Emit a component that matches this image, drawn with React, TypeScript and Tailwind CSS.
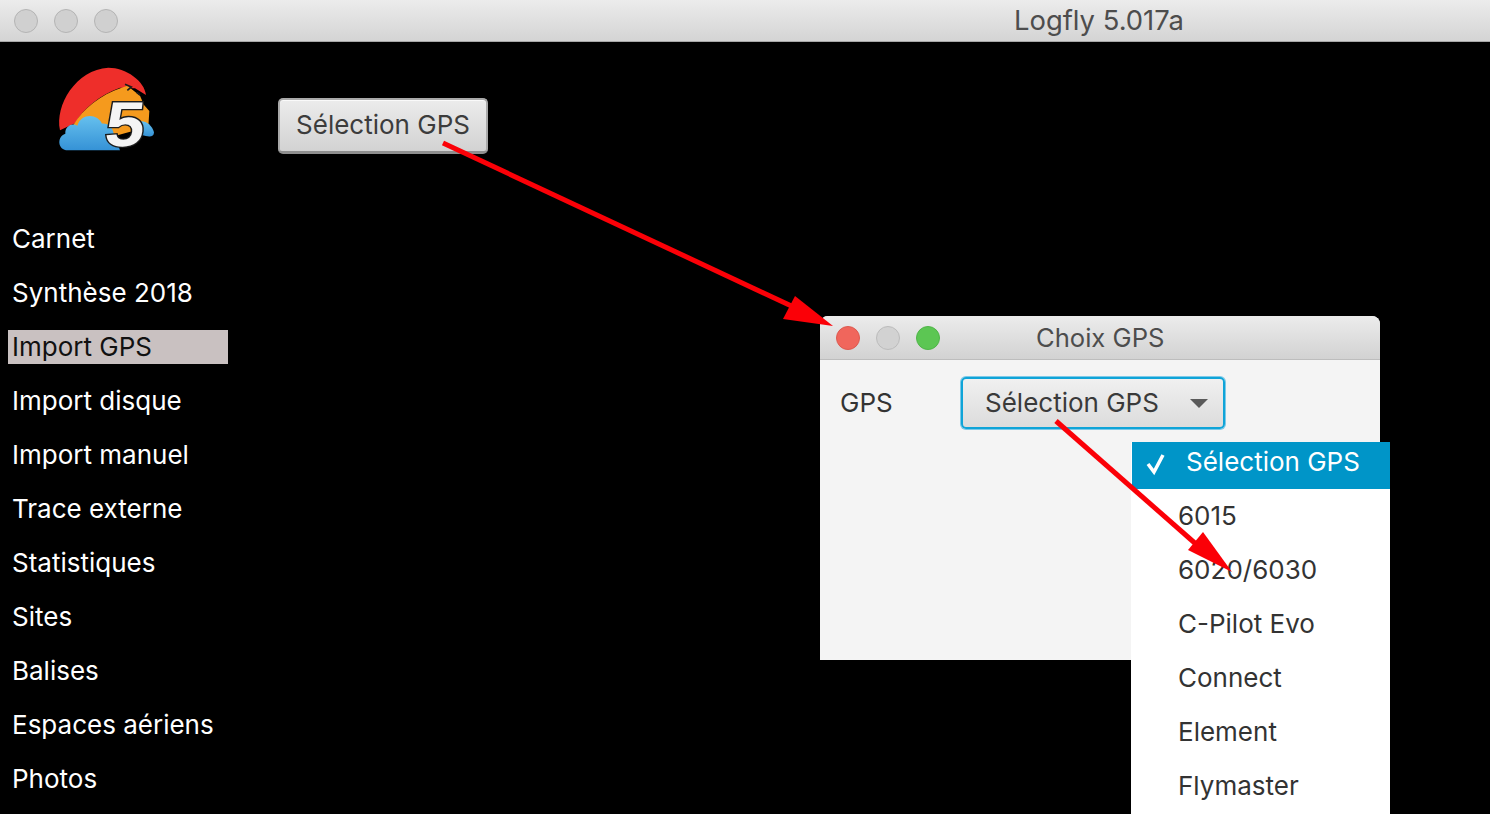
const menuItems = [
  'Carnet',
  'Synthèse 2018',
  'Import GPS',
  'Import disque',
  'Import manuel',
  'Trace externe',
  'Statistiques',
  'Sites',
  'Balises',
  'Espaces aériens',
  'Photos',
];

const gpsOptions = ['6015', '6020/6030', 'C-Pilot Evo', 'Connect', 'Element', 'Flymaster'];

const Dot = ({ className }: { className: string }) => (
  <span className={`block w-6 h-6 rounded-full border ${className}`} />
);

const Logo = () => (
  <svg width="130" height="105" viewBox="0 0 390 315" className="block">
    <defs>
      <linearGradient id="cloud" x1="0" y1="0" x2="0" y2="1">
        <stop offset="0" stopColor="#66c0ee" />
        <stop offset="1" stopColor="#3592d6" />
      </linearGradient>
    </defs>
    <path d="M60 226 C44 150 108 44 205 38 C258 38 314 78 318 120 L285 100 L240 98 C180 120 130 160 105 205 Z" fill="#ee2e2a" />
    <path d="M100 210 C130 160 180 120 245 98 L262 92 L300 122 L312 150 L328 168 L325 215 L200 250 Z" fill="#f59a1d" />
    <path d="M84 286 C52 286 50 244 76 236 C74 212 98 202 112 212 C124 172 174 176 186 206 C200 204 216 214 220 232 L240 286 Z" fill="url(#cloud)" />
    <path d="M290 205 C305 190 335 205 342 232 C342 248 325 246 305 240 Z" fill="url(#cloud)" />
    <path d="M255 88 L274 96 L262 106 M290 112 L300 120" fill="none" stroke="#1c1c1c" strokeWidth="5" />
    <text
      transform="translate(190 274) skewX(-6) scale(1.12 1)"
      fontFamily='"Liberation Sans", sans-serif'
      fontWeight="700"
      fontSize="190"
      fill="#f4f4f4"
      stroke="#1c1c1c"
      strokeWidth="8"
      paintOrder="stroke"
    >
      5
    </text>
  </svg>
);

export default function App() {
  return (
    <div className="relative w-[1490px] h-[814px] overflow-hidden bg-black font-['Inter',sans-serif] text-[26px] leading-[34px]">
      <header className="h-[42px] flex items-center pl-[14px] bg-gradient-to-b from-[#ececec] to-[#d4d4d4] border-b border-[#a8a8a8]">
        <div className="flex gap-4">
          <Dot className="bg-[#d0d0d0] border-[#b4b4b4]" />
          <Dot className="bg-[#d0d0d0] border-[#b4b4b4]" />
          <Dot className="bg-[#d0d0d0] border-[#b4b4b4]" />
        </div>
        <span className="ml-[896px] pb-px text-[27.4px] text-[#4d4d4d]">Logfly 5.017a</span>
      </header>

      <div className="flex">
        <aside className="w-[228px] ml-2 shrink-0">
          <div className="h-[180px] pt-[13px] pl-[32px]">
            <Logo />
          </div>
          <nav className="flex flex-col gap-5 text-white">
            {menuItems.map((item) => (
              <div
                key={item}
                className={`h-[34px] w-[220px] pl-1 ${item === 'Import GPS' ? 'bg-[#c9c1c1] text-[#111]' : ''}`}
              >
                {item}
              </div>
            ))}
          </nav>
        </aside>
        <main className="pl-[42px] pt-[56px]">
          <button className="w-[210px] h-[56px] pb-0.5 rounded-[5px] border-2 border-[#a9a9a9] border-b-[3px] border-b-[#8f8f8f] bg-gradient-to-b from-[#ececec] to-[#d2d2d2] shadow-[inset_0_1px_0_#fafafa] text-[#3c3c3c]">
            Sélection GPS
          </button>
        </main>
      </div>

      <section className="absolute left-[820px] top-[316px] w-[560px] h-[344px] bg-[#f4f4f4] rounded-t-lg">
        <div className="relative h-[44px] flex items-center pl-4 gap-4 rounded-t-lg bg-gradient-to-b from-[#ececec] to-[#d2d2d2] border-b border-[#bdbdbd]">
          <Dot className="bg-[#f0665c] border-[#dd5a50]" />
          <Dot className="bg-[#d2d2d2] border-[#bcbcbc]" />
          <Dot className="bg-[#5cc653] border-[#4fb548]" />
          <span className="ml-[80px] text-[25.6px] text-[#4d4d4d]">Choix GPS</span>
        </div>
        <div className="flex items-center pl-5 pt-[17px]">
          <span className="w-[121px] text-[#333]">GPS</span>
          <div className="w-[264px] h-[52px] flex items-center justify-between pl-[22px] pr-[15px] rounded-[5px] border-2 border-[#0fa4d8] ring-1 ring-[#7cc9e8] bg-gradient-to-b from-[#f0f0f0] to-[#dcdcdc] text-[#3a3a3a]">
            <span>Sélection GPS</span>
            <span className="w-0 h-0 border-x-[9px] border-x-transparent border-t-[9px] border-t-[#5a5a5a]" />
          </div>
        </div>
      </section>

      <div className="absolute left-[1131px] top-[442px] w-[259px] h-[372px] bg-white text-[#333]">
        <div className="h-[47px] ml-px pb-2 flex items-center bg-[#0095c8] text-white">
          <svg width="24" height="24" viewBox="0 0 24 24" className="ml-[12px] mr-[18px] mt-1">
            <path d="M4 12 L10 20 L19 3" fill="none" stroke="white" strokeWidth="3.5" />
          </svg>
          <span>Sélection GPS</span>
        </div>
        <ul className="pl-[47px] pt-[10px] flex flex-col gap-5">
          {gpsOptions.map((option) => (
            <li key={option} className="h-[34px]">{option}</li>
          ))}
        </ul>
      </div>

      <svg className="absolute inset-0 pointer-events-none" width="1490" height="814">
        <path d="M443 143 L800 310" stroke="#fb0007" strokeWidth="5" />
        <path d="M833 326 L795 296 L783 319 Z" fill="#fb0007" />
        <path d="M1056 421 L1205 552" stroke="#fb0007" strokeWidth="5" />
        <path d="M1232 572 L1203 532 L1188 550 Z" fill="#fb0007" />
      </svg>
    </div>
  );
}
